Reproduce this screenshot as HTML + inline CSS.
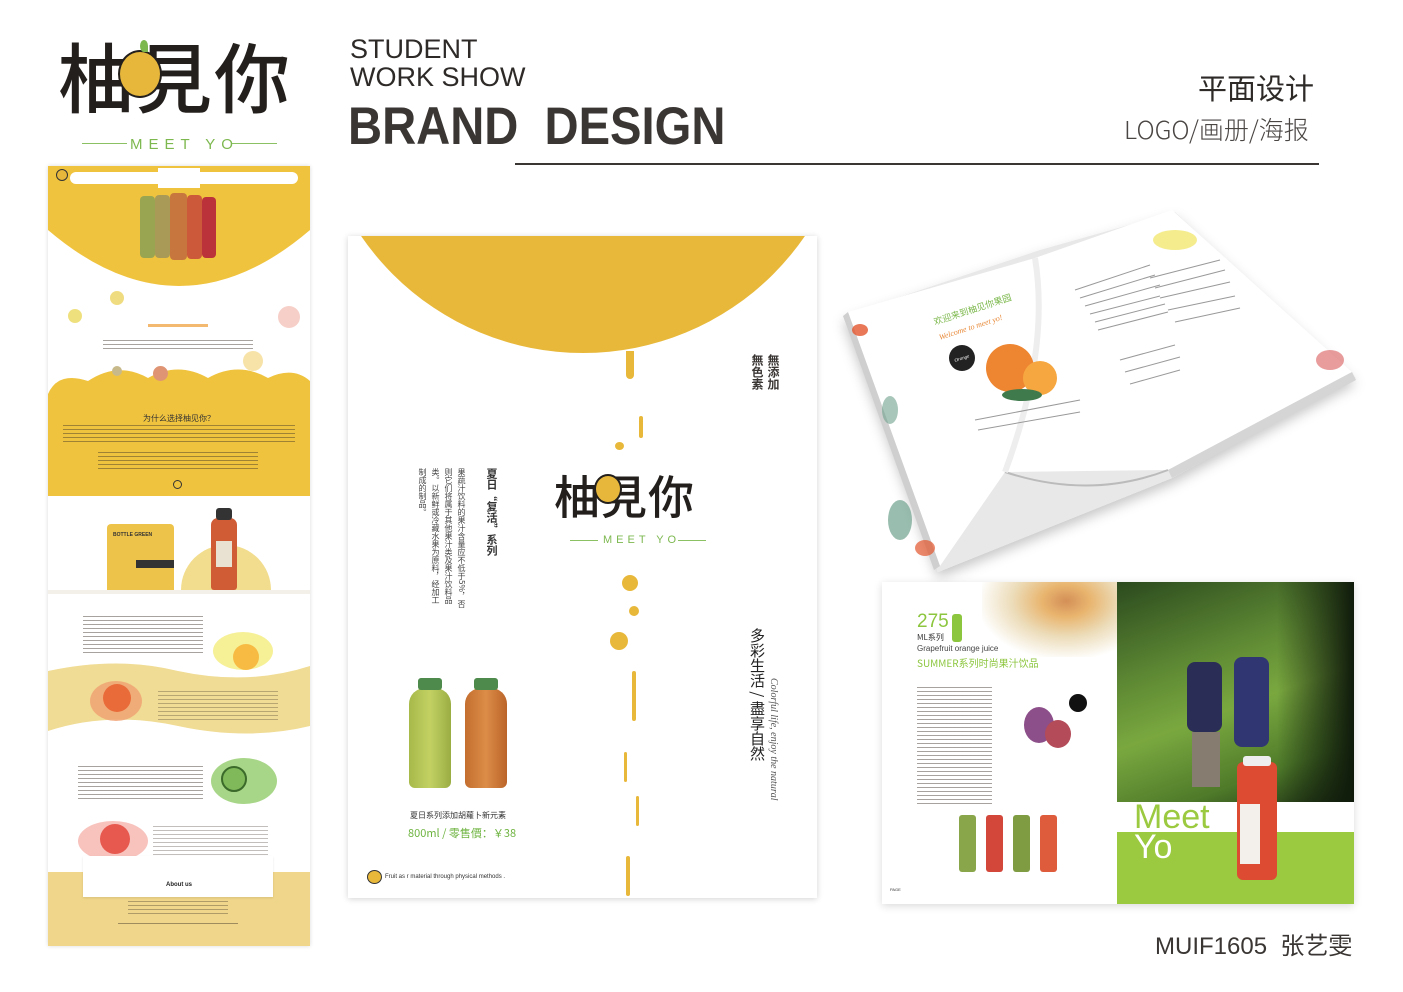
<!DOCTYPE html>
<html><head><meta charset="utf-8">
<style>
*{margin:0;padding:0;box-sizing:border-box}
body{width:1403px;height:992px;background:#fff;position:relative;overflow:hidden;font-family:"Liberation Sans","Noto Sans CJK SC",sans-serif;color:#3a3634}
.abs{position:absolute}
.cjk{font-family:"Noto Sans CJK SC","WenQuanYi Zen Hei",sans-serif}
.vt{writing-mode:vertical-rl}
.tl{background:repeating-linear-gradient(rgba(60,50,40,.45) 0 1px,transparent 1px 4px)}
</style></head><body>

<!-- logo -->
<div class="abs cjk" style="left:58px;top:36px;font-size:76px;font-weight:500;color:#231f1c;letter-spacing:2px;line-height:1">柚見你</div>
<div class="abs" style="left:118px;top:50px;width:44px;height:48px;border-radius:50%;background:#e7b73c;border:2px solid #231f1c"></div>
<div class="abs" style="left:140px;top:40px;width:8px;height:12px;border-radius:50% 50% 0 50%;background:#7db84f"></div>
<div class="abs" style="left:82px;top:143px;width:45px;height:1px;background:#8cc163"></div>
<div class="abs" style="left:130px;top:136px;font-size:15px;color:#7db84f;letter-spacing:6px">MEET YO</div>
<div class="abs" style="left:232px;top:143px;width:45px;height:1px;background:#8cc163"></div>

<!-- header -->
<div class="abs" style="left:350px;top:35px;font-size:27px;color:#2d2a28;line-height:28px">STUDENT<br><span style="font-weight:300">WORK SHOW</span></div>
<div class="abs" style="left:348px;top:96px;font-size:53px;font-weight:700;color:#3a3634;transform:scaleX(0.89);transform-origin:0 0;white-space:nowrap">BRAND&nbsp; DESIGN</div>
<div class="abs cjk" style="left:1198px;top:66px;font-size:29px;color:#2d2a28">平面设计</div>
<div class="abs cjk" style="left:1124px;top:111px;font-size:25px;color:#4a4644;font-weight:300">LOGO/画册/海报</div>
<div class="abs" style="left:515px;top:163px;width:804px;height:2px;background:#3a3634"></div>

<!-- left web mock -->
<div class="abs" style="left:48px;top:166px;width:262px;height:780px;background:#fff;overflow:hidden;box-shadow:0 0 4px rgba(0,0,0,.15)">
  <svg class="abs" style="left:0;top:0" width="262" height="780">
    <path d="M0,0 H262 V64 Q131,176 0,64 Z" fill="#f0c33e"/>
    <path d="M0,228 Q10,205 40,215 Q70,195 100,212 Q130,195 160,212 Q190,195 220,212 Q245,200 262,215 V330 H0 Z" fill="#f0c33e"/>
    <path d="M0,505 Q70,490 130,505 Q200,520 262,500 V560 Q200,575 130,560 Q60,545 0,565 Z" fill="#f0dc94"/>
  </svg>
  <div class="abs" style="left:22px;top:6px;width:228px;height:12px;background:#fff;border-radius:6px"></div>
  <div class="abs" style="left:110px;top:2px;width:42px;height:20px;background:#fff"></div>
  <div class="abs" style="left:8px;top:3px;width:12px;height:12px;border-radius:50%;background:#e7b73c;border:1px solid #333"></div>
  <div class="abs" style="left:92px;top:30px;width:15px;height:62px;background:#9aa551;border-radius:4px"></div>
  <div class="abs" style="left:107px;top:29px;width:15px;height:63px;background:#aa9a58;border-radius:4px"></div>
  <div class="abs" style="left:122px;top:27px;width:17px;height:67px;background:#c7773d;border-radius:4px"></div>
  <div class="abs" style="left:139px;top:29px;width:15px;height:64px;background:#cc5a3a;border-radius:4px"></div>
  <div class="abs" style="left:154px;top:31px;width:14px;height:61px;background:#bb323a;border-radius:4px"></div>
  <div class="abs" style="left:20px;top:143px;width:14px;height:14px;border-radius:50%;background:#efe07e"></div>
  <div class="abs" style="left:230px;top:140px;width:22px;height:22px;border-radius:50%;background:#f6cfc8"></div>
  <div class="abs" style="left:195px;top:185px;width:20px;height:20px;border-radius:50%;background:#f7e3a7"></div>
  <div class="abs" style="left:64px;top:200px;width:10px;height:10px;border-radius:50%;background:#c8b98a"></div>
  <div class="abs" style="left:105px;top:200px;width:15px;height:15px;border-radius:50%;background:#df9574"></div>
  <div class="abs" style="left:62px;top:125px;width:14px;height:14px;border-radius:50%;background:#f0dc80"></div>
  <div class="abs" style="left:100px;top:158px;width:60px;height:3px;background:#f1a84e;opacity:.8"></div>
  <div class="abs tl" style="left:55px;top:174px;width:150px;height:9px"></div>
  <div class="abs cjk" style="left:0;top:247px;width:262px;text-align:center;font-size:8px;color:#333">为什么选择柚见你？</div>
  <div class="abs tl" style="left:15px;top:259px;width:232px;height:20px"></div>
  <div class="abs tl" style="left:50px;top:286px;width:160px;height:20px"></div>
  <div class="abs" style="left:125px;top:314px;width:9px;height:9px;border:1px solid #333;border-radius:50%"></div>
  <div class="abs" style="left:59px;top:358px;width:67px;height:66px;background:#eec34a;border-radius:4px 4px 0 0"></div>
  <div class="abs" style="left:65px;top:366px;font-size:5px;font-weight:700;color:#333">BOTTLE GREEN</div>
  <div class="abs" style="left:88px;top:394px;width:38px;height:8px;background:#333"></div>
  <div class="abs" style="left:133px;top:379px;width:90px;height:45px;background:#f2dd8e;border-radius:45px 45px 0 0"></div>
  <div class="abs" style="left:163px;top:352px;width:26px;height:72px;background:#d05c36;border-radius:7px 7px 3px 3px"></div>
  <div class="abs" style="left:168px;top:342px;width:16px;height:12px;background:#333;border-radius:3px"></div>
  <div class="abs" style="left:168px;top:375px;width:16px;height:26px;background:#e9e2d2"></div>
  <div class="abs" style="left:0;top:424px;width:262px;height:4px;background:#f3f0ea"></div>
  <div class="abs tl" style="left:35px;top:450px;width:120px;height:40px"></div>
  <div class="abs" style="left:165px;top:466px;width:60px;height:38px;border-radius:50%;background:#f5ee8c;opacity:.9"></div>
  <div class="abs" style="left:185px;top:478px;width:26px;height:26px;border-radius:50%;background:#f7bb44"></div>
  <div class="abs" style="left:42px;top:515px;width:52px;height:40px;border-radius:50%;background:#f0a070;opacity:.8"></div>
  <div class="abs" style="left:55px;top:518px;width:28px;height:28px;border-radius:50%;background:#ea6b3a"></div>
  <div class="abs tl" style="left:110px;top:525px;width:120px;height:30px;opacity:.7"></div>
  <div class="abs tl" style="left:30px;top:600px;width:125px;height:35px"></div>
  <div class="abs" style="left:163px;top:592px;width:66px;height:46px;border-radius:50%;background:#9fd17b;opacity:.9"></div>
  <div class="abs" style="left:173px;top:600px;width:26px;height:26px;border-radius:50%;border:2px solid #3b6a2a;background:#7fb95a"></div>
  <div class="abs" style="left:30px;top:655px;width:70px;height:40px;border-radius:50%;background:#f6b3ad;opacity:.8"></div>
  <div class="abs" style="left:52px;top:658px;width:30px;height:30px;border-radius:50%;background:#e4473c;opacity:.85"></div>
  <div class="abs tl" style="left:105px;top:660px;width:115px;height:35px;opacity:.7"></div>
  <div class="abs" style="left:0;top:706px;width:262px;height:74px;background:#f0d68a"></div>
  <div class="abs" style="left:35px;top:690px;width:190px;height:41px;background:#fff;box-shadow:0 1px 2px rgba(0,0,0,.1)"></div>
  <div class="abs" style="left:118px;top:716px;font-size:6px;font-weight:700;color:#222">About us</div>
  <div class="abs tl" style="left:80px;top:735px;width:100px;height:16px;opacity:.8"></div>
  <div class="abs tl" style="left:70px;top:757px;width:120px;height:4px"></div>
</div>

<!-- poster -->
<div class="abs" style="left:348px;top:236px;width:469px;height:662px;background:#fff;overflow:hidden;box-shadow:0 1px 6px rgba(0,0,0,.18)">
  <div class="abs" style="left:-34px;top:-421px;width:538px;height:538px;border-radius:50%;background:#e8b83a"></div>
  <div class="abs" style="left:278px;top:115px;width:8px;height:28px;background:#e8b83a;border-radius:0 0 4px 4px"></div>
  <div class="abs" style="left:291px;top:180px;width:4px;height:22px;background:#e8b83a;border-radius:3px"></div>
  <div class="abs" style="left:267px;top:206px;width:9px;height:8px;background:#e8b83a;border-radius:50%"></div>
  <div class="abs" style="left:274px;top:339px;width:16px;height:16px;background:#e8b83a;border-radius:50%"></div>
  <div class="abs" style="left:281px;top:370px;width:10px;height:10px;background:#e8b83a;border-radius:50%"></div>
  <div class="abs" style="left:262px;top:396px;width:18px;height:18px;background:#e8b83a;border-radius:50%"></div>
  <div class="abs" style="left:284px;top:435px;width:4px;height:50px;background:#e8b83a;border-radius:3px"></div>
  <div class="abs" style="left:276px;top:516px;width:3px;height:30px;background:#e8b83a;border-radius:3px"></div>
  <div class="abs" style="left:288px;top:560px;width:3px;height:30px;background:#e8b83a;border-radius:3px"></div>
  <div class="abs" style="left:278px;top:620px;width:4px;height:40px;background:#e8b83a;border-radius:3px"></div>
  <div class="abs cjk" style="left:206px;top:236px;font-size:46px;font-weight:500;color:#231f1c;letter-spacing:1px;line-height:1">柚見你</div>
  <div class="abs" style="left:246px;top:238px;width:28px;height:30px;border-radius:50%;background:#e7b73c;border:2px solid #231f1c"></div>
  <div class="abs" style="left:222px;top:304px;width:28px;height:1px;background:#8cc163"></div>
  <div class="abs" style="left:255px;top:298px;font-size:11px;color:#7db84f;letter-spacing:4px">MEET YO</div>
  <div class="abs" style="left:330px;top:304px;width:28px;height:1px;background:#8cc163"></div>
  <div class="abs cjk vt" style="left:418px;top:118px;font-size:12px;font-weight:700;line-height:14px">無添加</div>
  <div class="abs cjk vt" style="left:402px;top:118px;font-size:12px;font-weight:700;line-height:14px">無色素</div>
  <div class="abs cjk vt" style="left:136px;top:232px;font-size:11px;font-weight:700;color:#333">夏日“复活”系列</div>
  <div class="abs cjk vt" style="left:68px;top:232px;font-size:8px;line-height:13px;color:#444;height:140px">果蔬汁饮料的果汁含量应不低于5%，否则它们将属于其他果汁类及果汁饮料品类。以新鲜或冷藏水果为原料，经加工制成的制品。</div>
  <div class="abs cjk vt" style="left:399px;top:392px;font-size:15px;color:#222">多彩生活 / 盡享自然</div>
  <div class="abs vt" style="left:420px;top:442px;font-size:10px;color:#555;font-style:italic;font-family:'Liberation Serif',serif">Colorful life, enjoy the natural</div>
  <div class="abs" style="left:61px;top:452px;width:42px;height:100px;background:linear-gradient(90deg,#a7b94a,#c3d163,#9aad43);border-radius:16px 16px 6px 6px"></div>
  <div class="abs" style="left:70px;top:442px;width:24px;height:12px;background:#4d8a4b;border-radius:3px"></div>
  <div class="abs" style="left:117px;top:452px;width:42px;height:100px;background:linear-gradient(90deg,#c46e2f,#dc8d47,#bb642a);border-radius:16px 16px 6px 6px"></div>
  <div class="abs" style="left:126px;top:442px;width:24px;height:12px;background:#4d8a4b;border-radius:3px"></div>
  <div class="abs cjk" style="left:62px;top:574px;font-size:8px;color:#333">夏日系列添加胡蘿卜新元素</div>
  <div class="abs cjk" style="left:60px;top:589px;font-size:11px;color:#6db33f">800ml / 零售價：￥38</div>
  <div class="abs" style="left:19px;top:634px;width:15px;height:14px;border-radius:50%;background:#e8b83a;border:1px solid #333"></div>
  <div class="abs" style="left:37px;top:638px;font-size:6px;color:#333">Fruit as r material through physical methods .</div>
</div>

<!-- tilted magazine -->
<svg class="abs" style="left:0;top:0" width="1403" height="992">
  <defs><filter id="sh" x="-10%" y="-10%" width="120%" height="130%"><feDropShadow dx="0" dy="6" stdDeviation="6" flood-color="#000" flood-opacity=".22"/></filter></defs>
  <polygon filter="url(#sh)" points="843,316 1040,250 1175,212 1356,378 1172,478 938,572" fill="#e8e8e8"/>
  <polygon points="848,312 1035,258 1172,210 1352,372 1168,470 1005,472 940,566" fill="#fff"/>
  <polygon points="843,316 848,312 940,566 934,570" fill="#cfcfcf"/>
  <polygon points="1352,372 1356,380 1172,478 1168,470" fill="#d5d5d5"/>
  <path d="M1005,472 Q1090,500 1168,470" stroke="#bbb" stroke-width="2" fill="none"/>
  <path d="M1035,258 Q1050,350 1005,472" stroke="#eee" stroke-width="6" fill="none"/>
  <circle cx="1010" cy="368" r="24" fill="#ee8530"/><circle cx="1040" cy="378" r="17" fill="#f6a740"/>
  <ellipse cx="1022" cy="395" rx="20" ry="6" fill="#3f7a4c"/>
  <circle cx="962" cy="358" r="13" fill="#222"/>
  <ellipse cx="1175" cy="240" rx="22" ry="10" fill="#f4ec8d"/>
  <ellipse cx="900" cy="520" rx="12" ry="20" fill="#6ea18c" opacity=".7"/>
  <ellipse cx="890" cy="410" rx="8" ry="14" fill="#6ea18c" opacity=".6"/>
  <ellipse cx="860" cy="330" rx="8" ry="6" fill="#e2562e" opacity=".8"/>
  <ellipse cx="1330" cy="360" rx="14" ry="10" fill="#d95a5a" opacity=".6"/>
  <ellipse cx="925" cy="548" rx="10" ry="8" fill="#e2562e" opacity=".7"/>
  <g stroke="#999" stroke-width="1">
    <line x1="1075" y1="290" x2="1150" y2="265"/><line x1="1080" y1="298" x2="1155" y2="275"/><line x1="1085" y1="306" x2="1160" y2="285"/><line x1="1090" y1="314" x2="1160" y2="296"/><line x1="1095" y1="322" x2="1165" y2="304"/><line x1="1098" y1="330" x2="1168" y2="312"/>
    <line x1="1150" y1="278" x2="1220" y2="260"/><line x1="1155" y1="288" x2="1225" y2="270"/><line x1="1160" y1="298" x2="1230" y2="282"/><line x1="1168" y1="310" x2="1235" y2="296"/><line x1="1175" y1="322" x2="1240" y2="308"/>
    <line x1="1120" y1="360" x2="1175" y2="345"/><line x1="1125" y1="372" x2="1180" y2="357"/><line x1="1130" y1="384" x2="1180" y2="370"/>
    <line x1="975" y1="420" x2="1080" y2="400"/><line x1="978" y1="430" x2="1080" y2="412"/>
  </g>
  <text x="935" y="325" font-size="9" fill="#7ab749" transform="rotate(-18 935 325)" font-family="Noto Sans CJK SC">欢迎来到柚见你果园</text>
  <text x="940" y="340" font-size="8" fill="#e88a3a" font-style="italic" transform="rotate(-18 940 340)" font-family="Liberation Serif">Welcome to meet yo!</text>
  <text x="955" y="362" font-size="5" fill="#fff" transform="rotate(-18 955 362)" font-family="Liberation Serif" font-style="italic">Orange</text>
</svg>

<!-- bottom magazine -->
<div class="abs" style="left:882px;top:582px;width:472px;height:322px;background:#fff;box-shadow:0 2px 8px rgba(0,0,0,.15);overflow:hidden">
  <div class="abs" style="left:100px;top:-5px;width:140px;height:80px;background:radial-gradient(ellipse at 60% 30%,#c9732d 0,#e3a24a 20%,#e7d3a7 45%,#fff 75%);opacity:.8"></div>
  <div class="abs" style="left:35px;top:30px;font-size:19px;color:#8cc63e;font-weight:300;line-height:1">275</div>
  <div class="abs cjk" style="left:35px;top:50px;font-size:8px;color:#333">ML系列</div>
  <div class="abs" style="left:70px;top:32px;width:10px;height:28px;background:#8cc63e;border-radius:3px"></div>
  <div class="abs" style="left:35px;top:62px;font-size:8px;color:#444">Grapefruit orange juice</div>
  <div class="abs cjk" style="left:35px;top:73px;font-size:10px;color:#8cc63e">SUMMER系列时尚果汁饮品</div>
  <div class="abs tl" style="left:35px;top:105px;width:75px;height:120px"></div>
  <div class="abs" style="left:142px;top:125px;width:30px;height:36px;background:#8d4f8a;border-radius:50%"></div>
  <div class="abs" style="left:163px;top:138px;width:26px;height:28px;background:#b34b58;border-radius:50%"></div>
  <div class="abs" style="left:187px;top:112px;width:18px;height:18px;background:#111;border-radius:50%"></div>
  <div class="abs" style="left:77px;top:233px;width:17px;height:57px;background:#8aa64a;border-radius:3px"></div>
  <div class="abs" style="left:104px;top:233px;width:17px;height:57px;background:#d2473a;border-radius:3px"></div>
  <div class="abs" style="left:131px;top:233px;width:17px;height:57px;background:#7f9c43;border-radius:3px"></div>
  <div class="abs" style="left:158px;top:233px;width:17px;height:57px;background:#de5b3b;border-radius:3px"></div>
  <div class="abs" style="left:8px;top:305px;font-size:4px;color:#333">PAGE</div>
  <div class="abs" style="left:235px;top:0;width:237px;height:220px;background:linear-gradient(160deg,#2b4a1e 0,#5f8a34 35%,#7aa83f 55%,#4f7b2a 80%,#1c2e13 100%)"></div>
  <div class="abs" style="left:395px;top:0;width:77px;height:220px;background:linear-gradient(90deg,rgba(0,0,0,0),#0f1a0b)"></div>
  <div class="abs" style="left:305px;top:80px;width:35px;height:70px;background:#2a2d55;border-radius:8px"></div>
  <div class="abs" style="left:352px;top:75px;width:35px;height:90px;background:#2f3672;border-radius:8px"></div>
  <div class="abs" style="left:310px;top:150px;width:28px;height:55px;background:#867d70"></div>
  <div class="abs" style="left:235px;top:250px;width:237px;height:72px;background:#9bc93f"></div>
  <div class="abs" style="left:252px;top:218px;font-size:34px;color:#9bc93f;line-height:34px;font-weight:300">Meet</div>
  <div class="abs" style="left:252px;top:248px;font-size:34px;color:#fff;line-height:34px;font-weight:300">Yo</div>
  <div class="abs" style="left:355px;top:180px;width:40px;height:118px;background:#dc4b32;border-radius:6px"></div>
  <div class="abs" style="left:361px;top:174px;width:28px;height:10px;background:#eee;border-radius:3px"></div>
  <div class="abs" style="left:358px;top:222px;width:20px;height:60px;background:#f3efeb"></div>
</div>

<div class="abs" style="left:1155px;top:926px;font-size:24px;color:#3a3634;font-family:'Liberation Sans','Noto Sans CJK SC',sans-serif">MUIF1605&nbsp; 张艺雯</div>
</body></html>
